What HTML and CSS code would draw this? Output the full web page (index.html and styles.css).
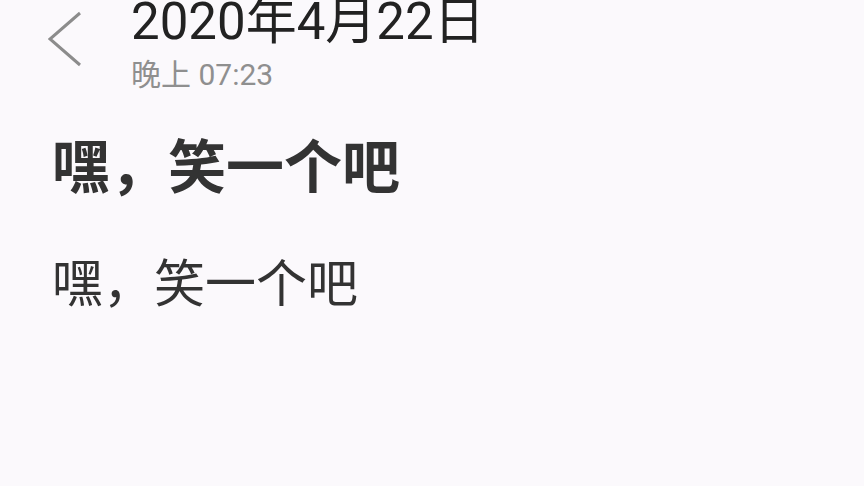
FILE: index.html
```html
<!DOCTYPE html>
<html lang="zh">
<head>
<meta charset="utf-8">
<link rel="stylesheet" href="styles.css">
</head>
<body>
<div class="page">
  <header class="header">
    <div class="back">
      <svg width="36" height="56" viewBox="0 0 36 56"><polyline points="32,2 2,28 32,54" fill="none" stroke="#8c8c8c" stroke-width="3"/></svg>
    </div>
    <div class="meta">
      <div class="date">2020年4月22日</div>
      <div class="time">晚上 07:23</div>
    </div>
  </header>
  <h1 class="title">嘿，笑一个吧</h1>
  <p class="body">嘿，笑一个吧</p>
</div>
</body>
</html>
```
FILE: styles.css
```css
html, body {
  margin: 0;
  padding: 0;
  background: #fbf9fc;
  font-family: "Roboto", "Noto Sans CJK SC", sans-serif;
}
.page {
  width: 864px;
  height: 486px;
  overflow: hidden;
  padding-left: 48px;
  box-sizing: border-box;
}
.header {
  display: flex;
  align-items: flex-start;
}
.back {
  width: 36px;
  padding-top: 11px;
  margin-right: 47px;
}
.back svg { display: block; }
.meta {
  display: flex;
  flex-direction: column;
}
.date {
  font-size: 51px;
  line-height: 44px;
  color: #222;
}
.time {
  font-size: 30px;
  line-height: 36px;
  color: #8f8f8f;
  margin-top: 13px;
}
.title {
  margin: 0;
  padding-left: 4px;
  margin-top: 35px;
  font-size: 58px;
  line-height: 70px;
  font-weight: bold;
  color: #333;
  font-family: "Noto Sans CJK SC", sans-serif;
}
.body {
  margin: 0;
  padding-left: 4px;
  margin-top: 52px;
  font-size: 51px;
  line-height: 60px;
  color: #333;
  font-family: "Noto Sans CJK SC", sans-serif;
}
```
